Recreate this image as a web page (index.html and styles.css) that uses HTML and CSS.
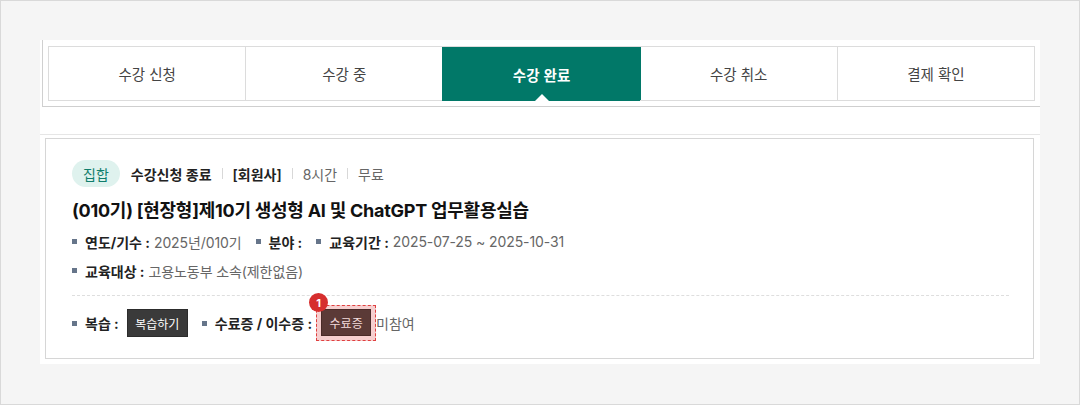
FILE: index.html
```html
<!DOCTYPE html>
<html lang="ko">
<head>
<meta charset="utf-8">
<title>수강 완료</title>
<link rel="stylesheet" href="styles.css">
</head>
<body>
<div class="frame">
  <div class="panel">
    <div class="tab-wrap">
      <ul class="tabs">
        <li class="tab">수강 신청</li>
        <li class="tab">수강 중</li>
        <li class="tab active">수강 완료</li>
        <li class="tab">수강 취소</li>
        <li class="tab">결제 확인</li>
      </ul>
    </div>
    <div class="divider"></div>
    <div class="card">
      <div class="meta">
        <span class="badge">집합</span>
        <span class="meta-strong">수강신청 종료</span>
        <span class="sep"></span>
        <span class="meta-strong">[회원사]</span>
        <span class="sep"></span>
        <span class="meta-light">8시간</span>
        <span class="sep"></span>
        <span class="meta-light">무료</span>
      </div>
      <h2 class="title">(010기) [현장형]제10기 생성형 AI 및 ChatGPT 업무활용실습</h2>
      <div class="info-row">
        <span class="item"><span class="bullet"></span><b>연도/기수 :</b><span class="val">2025년/010기</span></span>
        <span class="item"><span class="bullet"></span><b>분야 :</b></span>
        <span class="item"><span class="bullet"></span><b>교육기간 :</b><span class="val">2025-07-25 ~ 2025-10-31</span></span>
      </div>
      <div class="info-row">
        <span class="item"><span class="bullet"></span><b>교육대상 :</b><span class="val">고용노동부 소속(제한없음)</span></span>
      </div>
      <div class="dots"></div>
      <div class="action-row">
        <span class="item"><span class="bullet"></span><b>복습 :</b></span>
        <span class="btn btn-dark">복습하기</span>
        <span class="item item-gap"><span class="bullet"></span><b>수료증 / 이수증 :</b></span>
        <span class="highlight">
          <span class="marker">1</span>
          <span class="btn btn-brown">수료증</span>
        </span>
        <span class="plain">미참여</span>
      </div>
    </div>
  </div>
</div>
</body>
</html>
```
FILE: styles.css
```css
* { box-sizing: border-box; }
html, body { margin: 0; padding: 0; }
body {
  width: 1080px;
  height: 405px;
  overflow: hidden;
  font-family: "Inter", "Noto Sans CJK KR", sans-serif;
  color: #222;
}
.frame {
  width: 1080px;
  height: 405px;
  background: #f5f5f5;
  border: 1px solid #d9d9d9;
  padding: 39px 0 0 39px;
}
.panel {
  width: 1000px;
  height: 324px;
  background: #fff;
}
.tab-wrap {
  margin-left: 2px;
  border-left: 1px solid #d0d0d0;
  border-bottom: 1px solid #cfcfcf;
  padding: 6px 5px 5px 5px;
}
.tabs {
  list-style: none;
  margin: 0;
  padding: 0;
  display: flex;
  border: 1px solid #dcdcdc;
  height: 55px;
}
.tab {
  flex: 1;
  display: flex;
  align-items: center;
  justify-content: center;
  font-family: "Noto Sans CJK KR", sans-serif;
  font-size: 14.5px;
  color: #444;
  border-left: 1px solid #dcdcdc;
  position: relative;
}
.tab:first-child { border-left: none; }
.tab.active {
  background: #017868;
  color: #fff;
  font-weight: 700;
  border-left-color: #017868;
  margin-bottom: -1px;
}
.tab.active + .tab { border-left-color: #017868; }
.tab.active::after {
  content: "";
  position: absolute;
  left: 50%;
  bottom: 0;
  margin-left: -7px;
  border-left: 7px solid transparent;
  border-right: 7px solid transparent;
  border-bottom: 7px solid #fff;
}
.divider {
  margin-top: 27px;
  border-top: 1px solid #e6e6e6;
}
.card {
  margin: 3px 0 0 5px;
  width: 989px;
  border: 1px solid #d6d6d6;
  padding: 21px 24px 17px 26px;
}
.meta {
  display: flex;
  align-items: center;
  height: 27px;
  font-size: 14px;
}
.badge {
  height: 27px;
  padding: 0 11px;
  border-radius: 14px;
  background: #dff2ee;
  color: #0f7d6c;
  font-size: 14px;
  display: flex;
  align-items: center;
  margin-right: 11px;
}
.meta-strong { font-weight: 600; color: #222; }
.meta-light { color: #666; }
.sep {
  width: 1px;
  height: 11px;
  background: #d8d8d8;
  margin: 0 10px;
}
.title {
  margin: 11px 0 0 0;
  font-size: 18px;
  line-height: 26px;
  font-weight: 700;
  color: #111;
  letter-spacing: -0.25px;
}
.info-row {
  display: flex;
  align-items: center;
  height: 29px;
  font-size: 14px;
}
.title + .info-row { margin-top: 3px; }
.item {
  display: inline-flex;
  align-items: center;
  margin-right: 14px;
  white-space: nowrap;
}
.item b { font-weight: 700; color: #222; }
.bullet {
  width: 5px;
  height: 5px;
  background: #66758a;
  margin-right: 8px;
  display: inline-block;
}
.val { color: #666; font-weight: 400; margin-left: 4px; letter-spacing: -0.1px; }
.dots {
  margin-top: 10px;
  border-top: 1px dashed #dedede;
}
.action-row {
  margin-top: 9px;
  display: flex;
  align-items: center;
  font-size: 14px;
}
.action-row .item { margin-right: 8px; }
.action-row .item-gap { margin-left: 14px; margin-right: 4px; }
.plain { color: #666; }
.btn {
  display: inline-flex;
  align-items: center;
  justify-content: center;
  font-size: 12px;
  height: 28px;
}
.btn-dark {
  background: #3a3a3a;
  color: #fff;
  width: 61px;
  border: 1px solid #2c2c2c;
}
.highlight {
  position: relative;
  display: inline-flex;
  border: 1px dashed #e04040;
  background: #f6cfcf;
  padding: 3px 4px 4px 4px;
}
.btn-brown {
  background: #5b3a37;
  color: #f3dcdc;
  width: 50px;
  height: 27px;
  border: 1px solid #4a2b28;
}
.marker {
  position: absolute;
  left: -8px;
  top: -13px;
  width: 19px;
  height: 19px;
  border-radius: 50%;
  background: #d62e2e;
  color: #fff;
  font-size: 11px;
  font-weight: 700;
  display: flex;
  align-items: center;
  justify-content: center;
}
```
